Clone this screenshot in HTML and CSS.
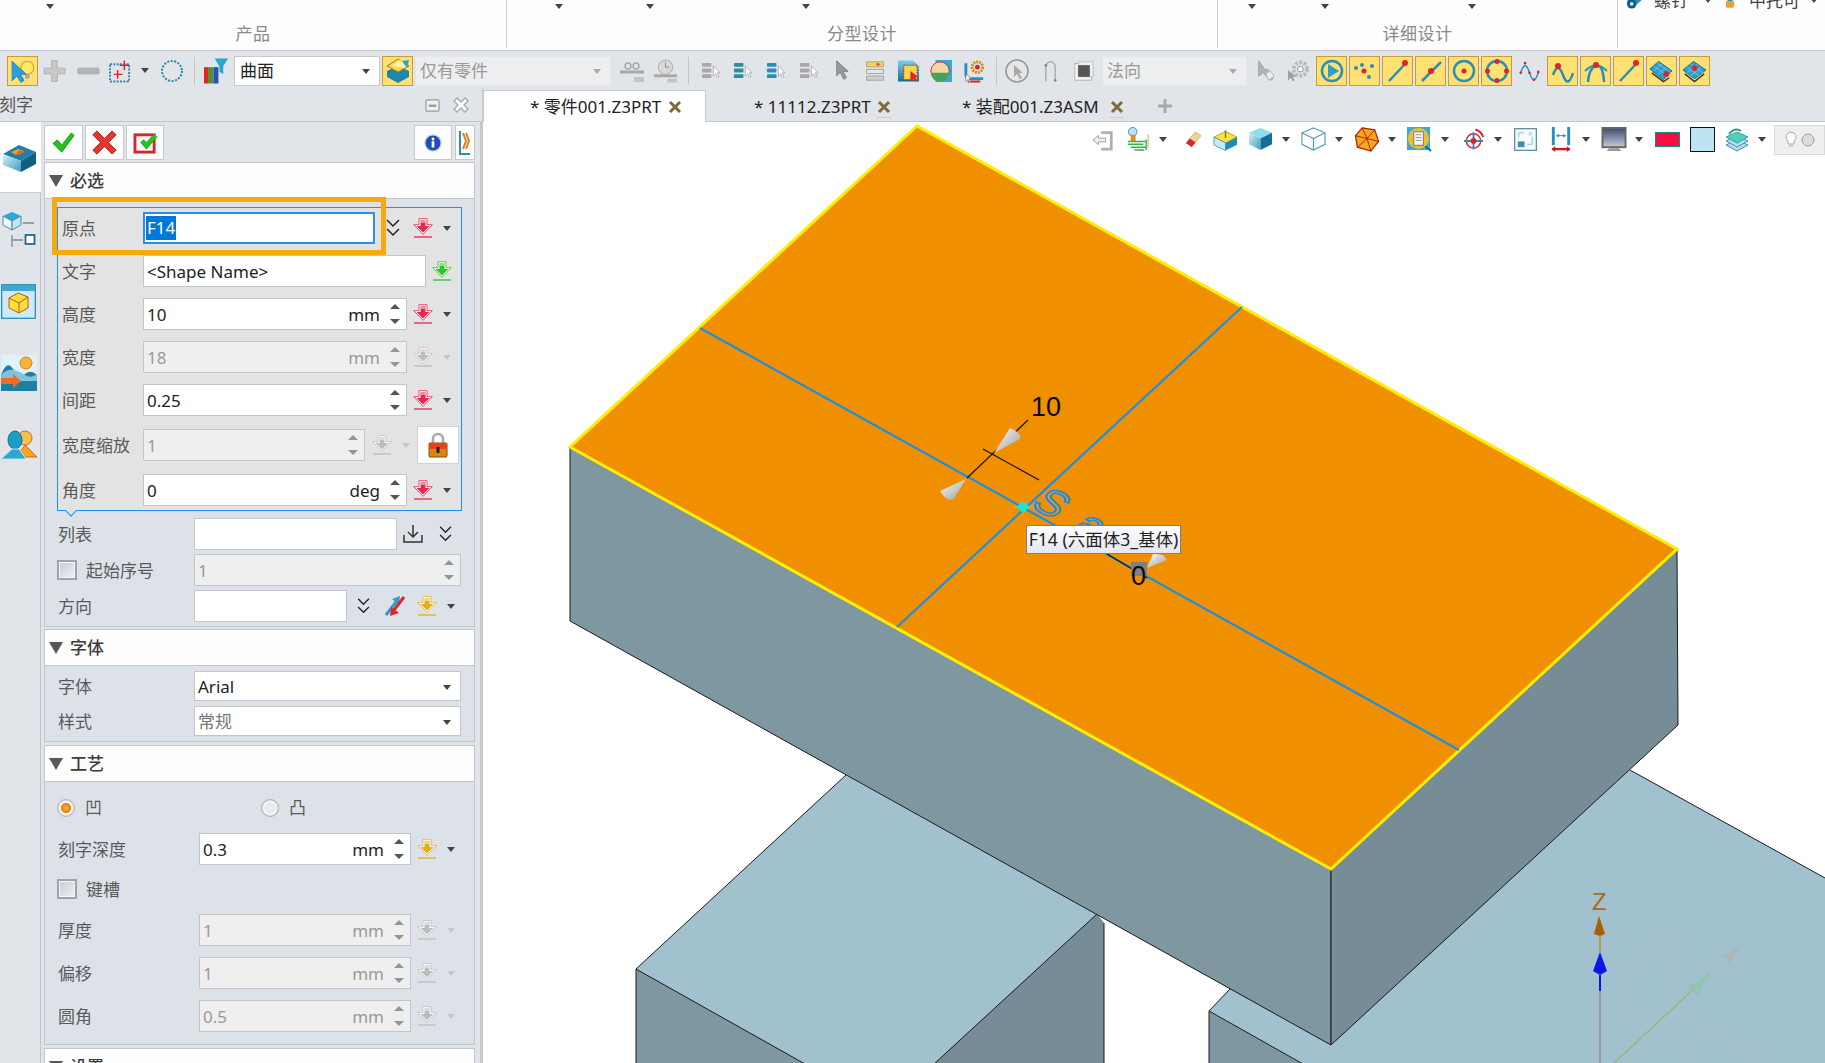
FILE: index.html
```html
<!DOCTYPE html>
<html lang="zh">
<head>
<meta charset="utf-8">
<title>刻字</title>
<link rel="stylesheet" href="styles.css">
</head>
<body>
<svg class="sprite" width="0" height="0">
  <defs>
    <linearGradient id="gBlue" x1="0" y1="0" x2="0" y2="1"><stop offset="0" stop-color="#7fd0e8"/><stop offset="1" stop-color="#0f6f96"/></linearGradient>
    <linearGradient id="gSide" x1="0" y1="0" x2="1" y2="1"><stop offset="0" stop-color="#d8f0f8"/><stop offset="1" stop-color="#3d9bbd"/></linearGradient>
    <linearGradient id="gCone" x1="0" y1="0" x2="1" y2="1"><stop offset="0" stop-color="#fff"/><stop offset="1" stop-color="#9a9a9a"/></linearGradient>
    <linearGradient id="gMon" x1="0" y1="0" x2="0" y2="1"><stop offset="0" stop-color="#3c4a70"/><stop offset="1" stop-color="#c8ccd8"/></linearGradient>
    <radialGradient id="gRadio"><stop offset="0" stop-color="#f9b24a"/><stop offset=".55" stop-color="#e87f10"/><stop offset=".65" stop-color="#fff"/><stop offset="1" stop-color="#cfcfcf"/></radialGradient>
    <radialGradient id="gRadioOff"><stop offset="0" stop-color="#eceef0"/><stop offset=".6" stop-color="#e4e6ea"/><stop offset=".7" stop-color="#fff"/><stop offset="1" stop-color="#cfcfcf"/></radialGradient>

    <symbol id="sel" viewBox="0 0 24 24"><circle cx="16" cy="9" r="6" fill="#ffe95e" stroke="#d0a820"/><path d="M14 15h4v4h-4z" fill="#a8a8a8"/><path d="M2 3v18l4.500-4.500 3.500 6 3-1.800-3.500-5.700H15z" fill="#2a9fe0" stroke="#1c7fb8" stroke-width=".8"/></symbol>
    <symbol id="plus" viewBox="0 0 24 24"><path d="M9 1h6v8h8v6h-8v8H9v-8H1V9h8z" fill="#c8c8c8" stroke="#b4b4b4"/></symbol>
    <symbol id="minus" viewBox="0 0 24 24"><rect x="1" y="9" width="22" height="6" rx="1" fill="#b5b5b5" stroke="#a8a8a8"/></symbol>
    <symbol id="dotrect" viewBox="0 0 24 24"><rect x="1" y="5" width="20" height="18" fill="none" stroke="#2f86a8" stroke-width="2" stroke-dasharray="2 1.5"/><path d="M16 1v10M11 6h10M9 11v9M5 15.500h9" stroke="#d8242c" stroke-width="1.500"/></symbol>
    <symbol id="dotcirc" viewBox="0 0 24 24"><circle cx="12" cy="12" r="10" fill="none" stroke="#2f86a8" stroke-width="2" stroke-dasharray="2 1.500"/></symbol>
    <symbol id="filter" viewBox="0 0 26 26"><path d="M0 9h5v17H0z" fill="#d82a20"/><path d="M5 9h5v17H5z" fill="#3b9a3a"/><path d="M10 9h5v17h-5z" fill="#2d4fb0"/><path d="M11 0h14l-5 8v8l-4-2V8z" fill="#28a8c8"/></symbol>
    <symbol id="hlcube" viewBox="0 0 26 26"><path d="M13 8l11 5v6l-11 6-11-6v-6z" fill="#1f86ad"/><path d="M13 1L2 8l11 6 11-6z" fill="#ffd34d" stroke="#a97b10"/><path d="M6 8l9-6 7 4-2 4z" fill="#fff0a8"/><path d="M17 3l7-1-2 8z" fill="#3a9dc4"/></symbol>
    <symbol id="chain" viewBox="0 0 24 24"><path d="M0 13h24" stroke="#a8a8a8" stroke-width="3"/><circle cx="8" cy="7" r="3" fill="none" stroke="#aaa" stroke-width="1.500"/><circle cx="16" cy="7" r="3" fill="none" stroke="#aaa" stroke-width="1.500"/><path d="M14 18h10v5H14z" fill="#c4c4c4"/></symbol>
    <symbol id="clock" viewBox="0 0 24 24"><path d="M0 17h24" stroke="#a8a8a8" stroke-width="3"/><circle cx="12" cy="8" r="7.500" fill="#d8d8d8" stroke="#aaa"/><path d="M12 3v5h4" fill="none" stroke="#888"/><path d="M14 20h10v4H14z" fill="#c4c4c4"/></symbol>
    <symbol id="stack" viewBox="0 0 20 20"><rect x="1" y="2" width="10" height="4" rx="1" fill="currentColor"/><rect x="1" y="8" width="10" height="4" rx="1" fill="currentColor"/><rect x="1" y="14" width="10" height="4" rx="1" fill="currentColor"/><path d="M13 5v11l2.500-2.500 2 4 1.500-1-2-4h3z" fill="#fff" stroke="#999" stroke-width=".7"/></symbol>
    <symbol id="cursor" viewBox="0 0 16 24"><path d="M2 1v17l4-4 4 8 3-2-4-7h6z" fill="#9a9a9a" stroke="#777"/></symbol>
    <symbol id="list" viewBox="0 0 24 24"><rect x="2" y="1" width="20" height="6" fill="#ffd54a" stroke="#999"/><path d="M2 4h12v-2l5 2-5 2V4" fill="#e0401c"/><rect x="2" y="10" width="20" height="5" fill="#e6e6e6" stroke="#999"/><rect x="2" y="18" width="20" height="5" fill="#d0d0d0" stroke="#999"/></symbol>
    <symbol id="blue-doc" viewBox="0 0 24 24"><path d="M1 1h16l6 6v16H1z" fill="url(#gBlue)"/><rect x="7" y="6" width="14" height="15" fill="#ffd54a" stroke="#c8242c" stroke-dasharray="2 1"/><path d="M14 12v10l3-2 2 3 2-1-2-3 3-1z" fill="#d8242c"/></symbol>
    <symbol id="globe" viewBox="0 0 24 24"><rect x="6" y="0" width="18" height="24" fill="#3aa8d0"/><circle cx="11" cy="12" r="10" fill="#f0d8a0" stroke="#c8242c"/><path d="M1 14a10 10 0 0 0 20 0z" fill="#4ba05a"/></symbol>
    <symbol id="gearb" viewBox="0 0 24 24"><circle cx="15" cy="8" r="5.500" fill="none" stroke="#e08a10" stroke-width="3" stroke-dasharray="2 1"/><circle cx="15" cy="8" r="2.500" fill="#d8242c"/><path d="M3 4v12q0 4 4 4h14" fill="none" stroke="#2a8fc0" stroke-width="3"/><path d="M6 18v5h12" fill="none" stroke="#d8242c" stroke-width="2"/><path d="M3 15v8l2-2 2 3 1-1-2-3h3z" fill="#fff" stroke="#666" stroke-width=".6"/></symbol>
    <symbol id="compass" viewBox="0 0 24 24"><circle cx="12" cy="12" r="11" fill="#e6e6e6" stroke="#999" stroke-width="1.600"/><path d="M9 6v12l3-3 3 5 2-1-3-5h4z" fill="#a8a8a8"/></symbol>
    <symbol id="bend" viewBox="0 0 16 24"><path d="M3 23V6q5-8 10 0v16" fill="none" stroke="#aaa" stroke-width="1.500"/><circle cx="3" cy="6" r="1.500" fill="#888"/><circle cx="13" cy="22" r="1.500" fill="#888"/></symbol>
    <symbol id="square" viewBox="0 0 24 24"><rect x="1" y="3" width="20" height="20" fill="#f4f4f4" stroke="#aaa"/><rect x="5" y="1" width="18" height="18" fill="#eee" stroke="#bbb"/><rect x="5" y="5" width="14" height="14" fill="#555"/></symbol>
    <symbol id="arrowdis" viewBox="0 0 20 26"><path d="M2 1v18l5-4 2 2 8 7 2-3-7-7 2-2-5-1z" fill="#b4b4b4" stroke="#999"/><path d="M10 16l6-3 4 6-6 5z" fill="#eee" stroke="#aaa"/></symbol>
    <symbol id="gear" viewBox="0 0 24 24"><circle cx="14" cy="10" r="7" fill="none" stroke="#bbb" stroke-width="4" stroke-dasharray="3 1.500"/><circle cx="14" cy="10" r="3" fill="#fff" stroke="#888"/><path d="M1 11v11l3-3 2 4 2-1-2-4h4z" fill="#a0a0a0"/></symbol>

    <symbol id="play" viewBox="0 0 24 24"><circle cx="12" cy="12" r="10" fill="none" stroke="#2a8fb8" stroke-width="2.500"/><path d="M8 5l11 7-11 7z" fill="#2a9fd0"/></symbol>
    <symbol id="pts" viewBox="0 0 24 24"><circle cx="3" cy="9" r="2" fill="#2a8fb8"/><circle cx="9" cy="6" r="2" fill="#2a8fb8"/><circle cx="19" cy="7" r="2" fill="#2a8fb8"/><circle cx="16" cy="18" r="2" fill="#2a8fb8"/><circle cx="11" cy="12" r="2.500" fill="#e0242c"/></symbol>
    <symbol id="lineend" viewBox="0 0 24 24"><path d="M3 22L20 4" stroke="#2a8fb8" stroke-width="2.500"/><circle cx="19" cy="4" r="3" fill="#e0242c"/></symbol>
    <symbol id="linemid" viewBox="0 0 24 24"><path d="M3 22L22 3" stroke="#2a8fb8" stroke-width="2.500"/><circle cx="12" cy="12" r="3" fill="#e0242c"/></symbol>
    <symbol id="circc" viewBox="0 0 24 24"><circle cx="12" cy="12" r="10" fill="none" stroke="#2a8fb8" stroke-width="2.500"/><circle cx="12" cy="12" r="2.500" fill="#e0242c"/></symbol>
    <symbol id="circq" viewBox="0 0 24 24"><circle cx="12" cy="12" r="10" fill="none" stroke="#2a8fb8" stroke-width="2.500"/><g fill="#e0242c"><circle cx="12" cy="2.500" r="2.500"/><circle cx="12" cy="21.500" r="2.500"/><circle cx="2.500" cy="12" r="2.500"/><circle cx="21.500" cy="12" r="2.500"/></g></symbol>
    <symbol id="wavep" viewBox="0 0 24 24"><path d="M2 14q5-16 10 0t10 0" fill="none" stroke="#2a8fb8" stroke-width="1.600"/><g fill="#d8242c"><circle cx="7" cy="3" r="1.500"/><circle cx="2" cy="14" r="1.500"/><circle cx="12" cy="14" r="1.500"/><circle cx="17" cy="22" r="1.500"/><circle cx="22" cy="13" r="1.500"/></g></symbol>
    <symbol id="wavea" viewBox="0 0 24 24"><path d="M2 16q5-14 10 0t10-2" fill="none" stroke="#2a8fb8" stroke-width="2.500"/><circle cx="7" cy="7" r="3" fill="#e0242c"/></symbol>
    <symbol id="arch" viewBox="0 0 24 24"><path d="M1 12q11-11 22 0" fill="none" stroke="#2a8fb8" stroke-width="2"/><path d="M4 23q1-14 8-16t8 16" fill="none" stroke="#2a8fb8" stroke-width="2.500"/><circle cx="12" cy="6" r="3" fill="#e0242c"/></symbol>
    <symbol id="surf1" viewBox="0 0 26 24"><path d="M1 10l9-8 14 10-9 9z" fill="#2a9fd0" stroke="#0f6f96"/><path d="M5 7l14 10M9 4l14 10M5 12l9-8M9 16l9-8" stroke="#9adcf0" stroke-width=".6"/><path d="M3 14l12 9 6-4" fill="none" stroke="#333" stroke-width="1.500"/><circle cx="18" cy="15" r="3" fill="#e0242c"/></symbol>
    <symbol id="surf2" viewBox="0 0 26 24"><path d="M1 11l11-9 13 9-12 9z" fill="#2a9fd0" stroke="#0f6f96"/><path d="M5 8l13 9M9 5l13 9M5 14l11-9M9 17l11-9" stroke="#9adcf0" stroke-width=".6"/><path d="M3 15l10 8 10-8" fill="none" stroke="#333" stroke-width="1.500"/><circle cx="13" cy="9" r="3" fill="#e0242c"/></symbol>

    <symbol id="pick" viewBox="0 0 20 20"><path d="M6 .7h8v6h5.300L10 16.300.700 6.700H6z" fill="#fff" stroke="currentColor" stroke-opacity=".8"/><path d="M7.500 2h5v6h4L10 14.500 3.500 8h4z" fill="currentColor"/><path d="M7.500 2h5v3h-5z" fill="#fff" fill-opacity=".45"/><path d="M1 19h18" stroke="currentColor" stroke-width="1.300"/></symbol>
    <symbol id="chev" viewBox="0 0 14 20"><path d="M1 2l6 6 6-6M1 11l6 6 6-6" fill="none" stroke="#222" stroke-width="1.500"/></symbol>
    <symbol id="dl" viewBox="0 0 20 20"><path d="M1 11v7h18v-7M10 1v12M5 8l5 5 5-5" fill="none" stroke="#333" stroke-width="1.500"/></symbol>
    <symbol id="flip" viewBox="0 0 22 22"><path d="M2 20L12 7" stroke="#2a9fd0" stroke-width="3"/><path d="M8 4l8-3-1 9z" fill="#2a9fd0"/><path d="M20 2L10 15" stroke="#e0242c" stroke-width="3"/><path d="M6 21l1-9 8 6z" fill="#e0242c"/></symbol>
    <symbol id="lock" viewBox="0 0 20 26"><path d="M5 12V7a5 5 0 0 1 10 0v5" fill="none" stroke="#aaa" stroke-width="2.500"/><rect x="1" y="11" width="18" height="14" rx="1" fill="#d9860f" stroke="#8a4a10"/><rect x="1" y="11" width="18" height="6" fill="#e8421c"/><rect x="8.500" y="15" width="3" height="6" fill="#222"/></symbol>

    <symbol id="exit" viewBox="0 0 24 24"><path d="M10 4h11v18H10" fill="none" stroke="#b0b0b0" stroke-width="3"/><path d="M1 12l6-5v3h8v4H7v3z" fill="#f0f0f0" stroke="#999"/></symbol>
    <symbol id="mill" viewBox="0 0 26 26"><circle cx="8" cy="5" r="4.500" fill="#bfe0ee" stroke="#3a8fb8"/><rect x="6" y="8" width="5" height="7" fill="#e88a20"/><path d="M3 15h18M3 18h16M6 21h16M10 24h10M22 13v11" fill="none" stroke="#36b34a" stroke-width="1.500"/><path d="M24 8v14" stroke="#d8a060"/></symbol>
    <symbol id="eraser" viewBox="0 0 18 20"><path d="M1 14L11 2l6 4L7 18z" fill="#f2d488" stroke="#999" stroke-width=".6"/><path d="M1 14l4-5 6 4-4 5z" fill="#d8242c"/><path d="M2 15l4 3" stroke="#fff"/></symbol>
    <symbol id="ycube" viewBox="0 0 26 24"><path d="M13 3l12 6-12 6L1 9z" fill="#ffe040" stroke="#c8a010"/><path d="M1 9l12 6v8L1 17z" fill="#c5ecf6" stroke="#4aa0c0"/><path d="M25 9l-12 6v8l12-6z" fill="#1c8cb8"/><path d="M13 10V2" stroke="#2fa03a" stroke-width="1.500"/></symbol>
    <symbol id="bcube" viewBox="0 0 26 26"><path d="M13 1l12 5-12 6L1 6z" fill="#8fdcee"/><path d="M1 6l12 6v12L1 18z" fill="url(#gSide)"/><path d="M25 6l-12 6v12l12-6z" fill="#136f95"/></symbol>
    <symbol id="wcube" viewBox="0 0 26 26"><path d="M13 1l12 5v12l-12 6-12-6V6zM1 6l12 6 12-6M13 12v12" fill="#fff" stroke="#5a9ab8" stroke-width="1.200"/></symbol>
    <symbol id="poly" viewBox="0 0 26 26"><path d="M8 1l13 2 4 12-8 10-14-4L1 9z" fill="#f4a81c" stroke="#b0200c" stroke-width="1.300"/><path d="M13 12L8 1M13 12L21 3M13 12l12 3M13 12l4 13M13 12L3 21M13 12L1 9" stroke="#b0200c"/></symbol>
    <symbol id="docz" viewBox="0 0 26 26"><rect x="0" y="0" width="24" height="24" fill="#3aa8d8"/><circle cx="12" cy="12" r="11" fill="#e8c030"/><rect x="7" y="5" width="10" height="14" fill="#f4f4f4" stroke="#777"/><path d="M9 8h6M9 11h6M9 14h6" stroke="#999"/><path d="M19 20l6 5" stroke="#1a6a90" stroke-width="2"/></symbol>
    <symbol id="target" viewBox="0 0 22 24"><circle cx="11" cy="13" r="7.500" fill="none" stroke="#d8242c" stroke-width="1.500"/><path d="M11 4v18M1 13h20" stroke="#2a8fb8" stroke-width="2"/><circle cx="11" cy="13" r="3" fill="#d8242c"/><path d="M13 1a11 11 0 0 1 8 8" fill="none" stroke="#d8242c" stroke-width="2"/></symbol>
    <symbol id="fit" viewBox="0 0 24 24"><rect x=".700" y=".700" width="22.600" height="22.600" fill="#f8fbfc" stroke="#5a8aa0" stroke-width="1.300"/><rect x="4" y="14" width="7" height="6" fill="#3a8fb8"/><path d="M5 10V5h5" fill="none" stroke="#7cc4dc"/><path d="M19 9v8h-5" fill="none" stroke="#7cc4dc"/><circle cx="17" cy="6" r="2" fill="#bce4f0"/></symbol>
    <symbol id="dim" viewBox="0 0 20 26"><path d="M2 0v19M18 0v19" stroke="#2a8fb8" stroke-width="3"/><path d="M5 9h10" stroke="#2a8fb8"/><path d="M5 9l3-2v4zM15 9l-3-2v4z" fill="#2a8fb8"/><path d="M1 23h18" stroke="#c02020" stroke-width="2.500"/><path d="M0 23l4-3v6zM20 23l-4-3v6z" fill="#c02020"/></symbol>
    <symbol id="mon" viewBox="0 0 26 26"><rect x="1" y="1" width="24" height="20" fill="url(#gMon)" stroke="#666" stroke-width="2"/><path d="M8 22h10l3 3H5z" fill="#999"/></symbol>
    <symbol id="layers" viewBox="0 0 24 24"><path d="M1 17l11-5 11 5-11 6z" fill="#b7dcec" stroke="#4a90b0"/><path d="M1 13l11-5 11 5-11 6z" fill="#b7dcec" stroke="#4a90b0"/><path d="M1 9l11-5 11 5-11 6z" fill="#4fd0b8" stroke="#3aa0a0"/><path d="M4 6q6-7 12-3" fill="none" stroke="#2a9a80" stroke-width="2"/></symbol>

    <symbol id="rail1" viewBox="0 0 36 32"><path d="M18 4l17 7-15 9L2 13z" fill="#1f7fa6"/><path d="M10 11l7-3 6 2-8 4z" fill="#e8a030"/><path d="M18 9l6 2-6 3-3-1z" fill="#e8641c"/><path d="M2 13l18 7v11L2 24z" fill="url(#gSide)"/><path d="M35 11l-15 9v11l15-8z" fill="#0f5f82"/></symbol>
    <symbol id="rail2" viewBox="0 0 34 36"><path d="M10 1l9 4-9 5-9-5z" fill="#2aa8d8"/><path d="M1 5l9 5v9l-9-5z" fill="#eaf6fb" stroke="#5a8aa0"/><path d="M19 5l-9 5v9l9-5z" fill="#bfe4f2" stroke="#5a8aa0"/><path d="M21 12h11M10 24v12M10 29h11" stroke="#6a8ea4" stroke-width="1.300"/><rect x="23.500" y="24" width="9" height="9" fill="#fff" stroke="#1d6a8f" stroke-width="1.800"/></symbol>
    <symbol id="rail3" viewBox="0 0 35 35"><rect x=".700" y=".700" width="33.600" height="33.600" fill="#cfeaf6" stroke="#2a8fb8" stroke-width="1.300"/><rect x="1" y="1" width="33" height="6" fill="#41a8cc"/><path d="M8 14l9-5 10 4v11l-9 5-10-5z" fill="#ffdf3a" stroke="#c0541c"/><path d="M8 14l10 5 9-6M18 19v10" fill="none" stroke="#c0541c"/></symbol>
    <symbol id="rail4" viewBox="0 0 36 36"><rect width="36" height="36" fill="#1f7fa0"/><path d="M0 0h36v20q-6-6-12-1t-12-5-12 6z" fill="#dff2f8"/><path d="M0 20q6-6 12-5t12 5 12-1v7H0z" fill="#7ec4da"/><circle cx="25" cy="8" r="6" fill="#f6b23c" stroke="#d8801c"/><path d="M0 23h12v-4l8 7-8 7v-4H0z" fill="#ef6b2a"/></symbol>
    <symbol id="rail5" viewBox="0 0 36 32"><circle cx="24" cy="9" r="7" fill="#f7c050" stroke="#d8641c"/><path d="M18 24l6-8 12 12H24z" fill="#f4a81c" stroke="#d8641c"/><ellipse cx="14" cy="11" rx="7" ry="9" fill="#1a9fc4" stroke="#0f6f96"/><path d="M0 30l11-10h7l7 10z" fill="#28a8cc" stroke="#bfe4f2"/></symbol>

    <symbol id="check" viewBox="0 0 26 24"><path d="M1 13l5-4 5 6L22 1l3 3L11 23z" fill="#22c41e" stroke="#118a10"/></symbol>
    <symbol id="cross" viewBox="0 0 26 26"><path d="M5 1l8 8 8-8 4 4-8 8 8 8-4 4-8-8-8 8-4-4 8-8-8-8z" fill="#e8352c" stroke="#a01a14"/></symbol>
    <symbol id="checkb" viewBox="0 0 26 24"><rect x="2" y="4" width="20" height="18" fill="#fff" stroke="#d8242c" stroke-width="3"/><path d="M8 12l3-3 3 3 8-9 3 3-11 13z" fill="#22c41e" stroke="#118a10" stroke-width=".6"/></symbol>
    <symbol id="info" viewBox="0 0 20 20"><circle cx="10" cy="10" r="9" fill="#1f4fb0" stroke="#c8d0dc" stroke-width="1.500"/><rect x="8.500" y="8" width="3" height="7" fill="#fff"/><circle cx="10" cy="5.500" r="1.600" fill="#fff"/></symbol>
    <symbol id="next" viewBox="0 0 12 26"><path d="M1 1v23h10" fill="none" stroke="#2a8fb8" stroke-width="2"/><path d="M4 3l3 8-3 8M7 3l3 8-3 8" fill="none" stroke="#e07a20" stroke-width="2"/></symbol>
    <symbol id="winb" viewBox="0 0 16 16"><rect x="1" y="2" width="14" height="12" rx="1.500" fill="#f0f0f0" stroke="#9a9a9a" stroke-width="1.300"/><rect x="4" y="7" width="8" height="2.500" fill="#9a9a9a"/></symbol>
    <symbol id="xgray" viewBox="0 0 18 18"><path d="M2 5l3-3 4 4 4-4 3 3-4 4 4 4-3 3-4-4-4 4-3-3 4-4z" fill="#fff" stroke="#a8a8a8" stroke-width="1.400"/></symbol>
    <symbol id="xtab" viewBox="0 0 14 14"><path d="M2 2l10 10M12 2L2 12" stroke="#7d6b3c" stroke-width="3"/></symbol>
    <symbol id="screw" viewBox="0 0 20 20"><path d="M1 10l12-8 6 5-12 10z" fill="#2a8fb8"/><circle cx="6" cy="13" r="5" fill="#0f5f82"/><circle cx="6" cy="13" r="2" fill="#bfe4f2"/></symbol>
    <symbol id="bolt" viewBox="0 0 12 20"><rect x="3" y="0" width="6" height="12" fill="#2a8fb8"/><rect x="1" y="10" width="10" height="8" rx="2" fill="#e8a030"/></symbol>
  </defs>
</svg>

<div class="app">
  <header class="ribbon">
    <section class="rgroup g1">
      <div class="rarrows a1"><i class="tri"></i></div>
      <div class="rlabel">产品</div>
    </section>
    <section class="rgroup g2">
      <div class="rarrows a2"><i class="tri"></i><i class="tri"></i><i class="tri"></i></div>
      <div class="rlabel">分型设计</div>
    </section>
    <section class="rgroup g3">
      <div class="rarrows a3"><i class="tri"></i><i class="tri"></i><i class="tri"></i></div>
      <div class="rlabel">详细设计</div>
    </section>
    <section class="g4">
      <svg width="19" height="20"><use href="#screw"/></svg><span class="m9">螺钉</span><i class="tri small m17"></i>
      <svg class="m14" width="10" height="20"><use href="#bolt"/></svg><span class="m14">中托可</span><i class="tri small m11"></i>
    </section>
  </header>

  <nav class="toolbar">
    <div class="hl w31 "><svg width="26" height="26"><use href="#sel"/></svg></div>
    <svg class="m5" width="23" height="24"><use href="#plus"/></svg>
    <svg class="m11" width="23" height="24"><use href="#minus"/></svg>
    <svg class="m9" width="23" height="24"><use href="#dotrect"/></svg>
    <i class="tri m9"></i>
    <svg class="m11" width="24" height="24"><use href="#dotcirc"/></svg>
    <i class="sep m10"></i>
    <svg class="m9" width="25" height="26"><use href="#filter"/></svg>
    <div class="select w146 m5"><span>曲面</span><i class="tri"></i></div>
    <div class="hl w31 m2"><svg width="26" height="26"><use href="#hlcube"/></svg></div>
    <div class="select off w196 m2"><span>仅有零件</span><i class="tri"></i></div>
    <svg class="m9" width="24" height="24"><use href="#chain"/></svg>
    <svg class="m10" width="23" height="24"><use href="#clock"/></svg>
    <i class="sep m11"></i>
    <svg class="m12 c-gray" width="19" height="19"><use href="#stack"/></svg>
    <svg class="m13 c-mix1" width="19" height="19"><use href="#stack"/></svg>
    <svg class="m14 c-mix2" width="19" height="19"><use href="#stack"/></svg>
    <svg class="m14 c-gray" width="19" height="19"><use href="#stack"/></svg>
    <svg class="m17" width="14" height="21"><use href="#cursor"/></svg>
    <svg class="m16" width="20" height="24"><use href="#list"/></svg>
    <svg class="m12" width="23" height="24"><use href="#blue-doc"/></svg>
    <svg class="m10" width="22" height="24"><use href="#globe"/></svg>
    <svg class="m11" width="23" height="24"><use href="#gearb"/></svg>
    <i class="sep m10"></i>
    <svg class="m8" width="24" height="24"><use href="#compass"/></svg>
    <svg class="m14" width="15" height="24"><use href="#bend"/></svg>
    <svg class="m16" width="20" height="20"><use href="#square"/></svg>
    <div class="select off w145 m8"><span>法向</span><i class="tri"></i></div>
    <svg class="m10" width="17" height="24"><use href="#arrowdis"/></svg>
    <svg class="m13" width="23" height="24"><use href="#gear"/></svg>
    <div class="hl w31 m6"><svg width="24" height="24"><use href="#play"/></svg></div>
    <div class="hl w31 m2"><svg width="24" height="24"><use href="#pts"/></svg></div>
    <div class="hl w31 m2"><svg width="24" height="24"><use href="#lineend"/></svg></div>
    <div class="hl w31 m2"><svg width="24" height="24"><use href="#linemid"/></svg></div>
    <div class="hl w31 m2"><svg width="24" height="24"><use href="#circc"/></svg></div>
    <div class="hl w31 m2"><svg width="24" height="24"><use href="#circq"/></svg></div>
    <svg class="m7" width="21" height="24"><use href="#wavep"/></svg>
    <div class="hl w31 m7"><svg width="24" height="24"><use href="#wavea"/></svg></div>
    <div class="hl w31 m2"><svg width="24" height="24"><use href="#arch"/></svg></div>
    <div class="hl w31 m2"><svg width="24" height="24"><use href="#lineend"/></svg></div>
    <div class="hl w31 m2"><svg width="25" height="24"><use href="#surf1"/></svg></div>
    <div class="hl w31 m2"><svg width="25" height="24"><use href="#surf2"/></svg></div>
  </nav>

  <div class="work">
    <aside class="left">
      <div class="ptitle">
        <span class="ptext">刻字</span>
        <svg class="pwin" width="15" height="15"><use href="#winb"/></svg>
        <svg class="m12" width="18" height="18"><use href="#xgray"/></svg>
      </div>
      <div class="pbody">
        <div class="rail">
          <div class="rtab on"><svg width="36" height="32"><use href="#rail1"/></svg></div>
          <div class="rtab"><svg width="34" height="36"><use href="#rail2"/></svg></div>
          <div class="rtab"><svg width="35" height="35"><use href="#rail3"/></svg></div>
          <div class="rtab"><svg width="36" height="36"><use href="#rail4"/></svg></div>
          <div class="rtab"><svg width="36" height="32"><use href="#rail5"/></svg></div>
        </div>
        <div class="panel">
          <div class="actions">
            <button class="abtn"><svg width="23" height="21"><use href="#check"/></svg></button>
            <button class="abtn"><svg width="25" height="25"><use href="#cross"/></svg></button>
            <button class="abtn b38"><svg width="25" height="23"><use href="#checkb"/></svg></button>
            <span class="grow"></span>
            <button class="abtn b38"><svg width="18" height="18"><use href="#info"/></svg></button>
            <button class="abtn b20"><svg width="12" height="26"><use href="#next"/></svg></button>
          </div>

          <section class="sec s1">
            <h3 class="shead"><i class="stri"></i>必选</h3>
            <div class="sbody b1">
              <div class="blue">
                <div class="anno"></div>
                <div class="row">
                  <label class="lab">原点</label>
                  <div class="field focus w232"><span class="selected">F14</span></div>
                  <svg class="m11" width="14" height="20"><use href="#chev"/></svg>
                  <svg class="m13 c-red" width="20" height="20"><use href="#pick"/></svg>
                  <i class="tri m10"></i>
                </div>
                <div class="row">
                  <label class="lab">文字</label>
                  <div class="field w283"><span>&lt;Shape Name&gt;</span></div>
                  <svg class="m6 c-green" width="20" height="20"><use href="#pick"/></svg>
                </div>
                <div class="row">
                  <label class="lab">高度</label>
                  <div class="field num w264"><span>10</span><em>mm</em><b class="spin"><i></i><i></i></b></div>
                  <svg class="m6 c-red" width="20" height="20"><use href="#pick"/></svg>
                  <i class="tri m10"></i>
                </div>
                <div class="row">
                  <label class="lab">宽度</label>
                  <div class="field num dis w264"><span>18</span><em>mm</em><b class="spin"><i></i><i></i></b></div>
                  <svg class="m6 c-off" width="20" height="20"><use href="#pick"/></svg>
                  <i class="tri off m10"></i>
                </div>
                <div class="row">
                  <label class="lab">间距</label>
                  <div class="field num w264"><span>0.25</span><em></em><b class="spin"><i></i><i></i></b></div>
                  <svg class="m6 c-red" width="20" height="20"><use href="#pick"/></svg>
                  <i class="tri m10"></i>
                </div>
                <div class="row lockrow">
                  <label class="lab">宽度缩放</label>
                  <div class="field num dis w222"><span>1</span><em></em><b class="spin"><i></i><i></i></b></div>
                  <svg class="m7 c-off" width="20" height="20"><use href="#pick"/></svg>
                  <i class="tri off m10"></i>
                  <button class="lockbtn m7"><svg width="20" height="26"><use href="#lock"/></svg></button>
                </div>
                <div class="row">
                  <label class="lab">角度</label>
                  <div class="field num w264"><span>0</span><em>deg</em><b class="spin"><i></i><i></i></b></div>
                  <svg class="m6 c-red" width="20" height="20"><use href="#pick"/></svg>
                  <i class="tri m10"></i>
                </div>
                <i class="notch"></i>
              </div>
              <div class="row2 t7">
                <label class="lab2">列表</label>
                <div class="field w203"></div>
                <svg class="m6" width="20" height="20"><use href="#dl"/></svg>
                <svg class="m16" width="13" height="18"><use href="#chev"/></svg>
              </div>
              <div class="row2 t4">
                <i class="cb"></i><label class="lab3">起始序号</label>
                <div class="field num dis w267"><span>1</span><em></em><b class="spin"><i></i><i></i></b></div>
              </div>
              <div class="row2 t4">
                <label class="lab2">方向</label>
                <div class="field w153"></div>
                <svg class="m10" width="13" height="18"><use href="#chev"/></svg>
                <svg class="m14" width="22" height="22"><use href="#flip"/></svg>
                <svg class="m11 c-yellow" width="20" height="20"><use href="#pick"/></svg>
                <i class="tri m10"></i>
              </div>
            </div>
          </section>

          <section class="sec s2">
            <h3 class="shead"><i class="stri"></i>字体</h3>
            <div class="sbody b2">
              <div class="row2 h30">
                <label class="lab2">字体</label>
                <div class="field drop w267"><span>Arial</span><i class="tri"></i></div>
              </div>
              <div class="row2 h30 t5">
                <label class="lab2">样式</label>
                <div class="field drop w267"><span class="gr">常规</span><i class="tri"></i></div>
              </div>
            </div>
          </section>

          <section class="sec s3">
            <h3 class="shead"><i class="stri"></i>工艺</h3>
            <div class="sbody b3">
              <div class="radios">
                <div class="radio"><svg width="18" height="18"><circle cx="9" cy="9" r="8.500" fill="url(#gRadio)" stroke="#b8b8b8"/></svg><span>凹</span></div>
                <div class="radio"><svg width="18" height="18"><circle cx="9" cy="9" r="8.500" fill="url(#gRadioOff)" stroke="#b0b0b0"/></svg><span>凸</span></div>
              </div>
              <div class="row2 t16">
                <label class="lab4">刻字深度</label>
                <div class="field num w212"><span>0.3</span><em>mm</em><b class="spin"><i></i><i></i></b></div>
                <svg class="m6 c-yellow" width="20" height="20"><use href="#pick"/></svg>
                <i class="tri m10"></i>
              </div>
              <div class="row2 h20 t14">
                <i class="cb"></i><label class="lab3">键槽</label>
              </div>
              <div class="row2 t15">
                <label class="lab4">厚度</label>
                <div class="field num dis w212"><span>1</span><em>mm</em><b class="spin"><i></i><i></i></b></div>
                <svg class="m6 c-off" width="20" height="20"><use href="#pick"/></svg>
                <i class="tri off m10"></i>
              </div>
              <div class="row2 t11">
                <label class="lab4">偏移</label>
                <div class="field num dis w212"><span>1</span><em>mm</em><b class="spin"><i></i><i></i></b></div>
                <svg class="m6 c-off" width="20" height="20"><use href="#pick"/></svg>
                <i class="tri off m10"></i>
              </div>
              <div class="row2 t11">
                <label class="lab4">圆角</label>
                <div class="field num dis w212"><span>0.5</span><em>mm</em><b class="spin"><i></i><i></i></b></div>
                <svg class="m6 c-off" width="20" height="20"><use href="#pick"/></svg>
                <i class="tri off m10"></i>
              </div>
            </div>
          </section>

          <section class="sec s4">
            <h3 class="shead"><i class="stri"></i>设置</h3>
          </section>
        </div>
      </div>
    </aside>

    <main class="right">
      <div class="tabs">
        <div class="tab on t1"><span>* 零件001.Z3PRT</span><svg width="14" height="14"><use href="#xtab"/></svg></div>
        <div class="tab t2"><span>* 11112.Z3PRT</span><svg class="ul" width="14" height="14"><use href="#xtab"/></svg></div>
        <div class="tab t3"><span>* 装配001.Z3ASM</span><svg class="ul" width="14" height="14"><use href="#xtab"/></svg></div>
        <svg class="addtab" width="16" height="16"><path d="M8 1v14M1 8h14" stroke="#a9a9a9" stroke-width="3"/></svg>
      </div>
      <div class="viewport">
        <svg class="scene" viewBox="483 121 1342 942" width="1342" height="942">
          <!-- lower left block -->
          <path d="M846 774L1097 913 1104 922V1063H934L805 1063 636 1063V968z" fill="#a2c1cf"/>
          <path d="M1097 913L1104 922V1063H934z" fill="#768c96"/>
          <path d="M636 968L805 1063H636z" fill="#7e97a1"/>
          <path d="M846 774L636 968L805 1063M636 968V1063M1097 913L934 1063M1104 922V1063" fill="none" stroke="#1a1a1a" stroke-width="1"/>
          <!-- lower right block -->
          <path d="M1230 988L1209 1010 1303 1063H1825V877L1630 769z" fill="#a2c1cf"/>
          <path d="M1209 1010L1303 1063H1209z" fill="#7e97a1"/>
          <path d="M1230 988L1209 1010L1303 1063M1209 1010V1063M1630 769L1825 877" fill="none" stroke="#1a1a1a" stroke-width="1"/>
          <!-- main block -->
          <path d="M570 446L1331 868V1044L570 620z" fill="#7e97a1" stroke="#1a1a1a" stroke-width="1"/>
          <path d="M1331 868L1677 548 1678 724 1331 1044z" fill="#768c96" stroke="#1a1a1a" stroke-width="1"/>
          <path d="M917 125L1677 548 1331 868 570 446z" fill="#f09000" stroke="#ffee00" stroke-width="3" stroke-linejoin="miter"/>
          <path d="M700 327L1459 749M1242 306L897 626" stroke="#1b8fe6" stroke-width="2.200"/>
          <!-- dimensions -->
          <path d="M1028 419L967 477M983 448L1039 479M1107 553L1147 577" stroke="#111" stroke-width="1.200"/>
          <path d="M994 452L1010 427Q1022 432 1020 438z" fill="url(#gCone)"/>
          <path d="M966 478L940 490Q946 500 953 499z" fill="url(#gCone)"/>
          <rect x="1131" y="561" width="16" height="14" fill="#808080"/>
          <path d="M1147 567L1153 553Q1165 552 1167 559z" fill="url(#gCone)"/>
          <text class="dim-text" x="1031" y="415">10</text>
          <text class="dim-text" x="1131" y="584">0</text>
          <text class="etch" transform="matrix(.875 .486 -.733 .68 1029 505)" x="0" y="0">Sa</text>
          <path d="M1023 496v20M1013 506h20" stroke="#f7a030" stroke-width="1"/>
          <path d="M1023 500l7 6-7 6-7-6z" fill="#27e0d4"/>
          <!-- triad -->
          <g fill="none" stroke="#b9c4ad" stroke-opacity=".65">
            <path d="M1600 994L1671 929V1008L1762 1060M1600 994L1691 1044V1063"/>
          </g>
          <path d="M1600 990V1063" stroke="#9c9aa8" stroke-width="2"/>
          <path d="M1613 1063L1710 973" stroke="#9eb57a" stroke-width="1.500"/>
          <path d="M1710 973L1742 944" stroke="#b6c0b0" stroke-width="1.200"/>
          <path d="M1710 973L1687 986 1697 995z" fill="#93c4b0"/>
          <path d="M1742 944L1723 955 1730 962z" fill="#a9b8b2"/>
          <path d="M1600 935V951" stroke="#b98a3a" stroke-width="1.500"/>
          <path d="M1599 915L1605 933 1600 935 1594 933z" fill="#a85f08"/>
          <path d="M1600 951L1607 970 1600 974 1593 970z" fill="#0a14f0"/>
          <path d="M1600 974V990" stroke="#0a14f0" stroke-width="2"/>
          <text class="axis" x="1592" y="909">Z</text>
        </svg>
        <div class="vtools">
          <svg width="22" height="22"><use href="#exit"/></svg>
          <svg class="m11" width="25" height="25"><use href="#mill"/></svg>
          <i class="tri m9"></i>
          <svg class="m18" width="17" height="19"><use href="#eraser"/></svg>
          <svg class="m11" width="25" height="24"><use href="#ycube"/></svg>
          <svg class="m10" width="25" height="25"><use href="#bcube"/></svg>
          <i class="tri m9"></i>
          <svg class="m11" width="25" height="25"><use href="#wcube"/></svg>
          <i class="tri m9"></i>
          <svg class="m11" width="26" height="25"><use href="#poly"/></svg>
          <i class="tri m8"></i>
          <svg class="m11" width="25" height="25"><use href="#docz"/></svg>
          <i class="tri m9"></i>
          <svg class="m14" width="21" height="24"><use href="#target"/></svg>
          <i class="tri m10"></i>
          <svg class="m12" width="23" height="23"><use href="#fit"/></svg>
          <svg class="m14" width="20" height="25"><use href="#dim"/></svg>
          <i class="tri m11"></i>
          <svg class="m11" width="26" height="25"><use href="#mon"/></svg>
          <i class="tri m8"></i>
          <i class="swatch red m12"></i>
          <i class="swatch sky m10"></i>
          <svg class="m10" width="24" height="24"><use href="#layers"/></svg>
          <i class="tri m9"></i>
          <div class="bulbs m8">
            <svg width="12" height="18"><path d="M6 1a5 5 0 0 1 3 9v3H3v-3a5 5 0 0 1 3-9zM4 15h4" fill="#fff" stroke="#aaa"/></svg>
            <svg width="14" height="14"><circle cx="7" cy="7" r="6" fill="#ddd" stroke="#999"/></svg>
          </div>
        </div>
        <div class="tooltip">F14 (六面体3_基体)</div>
      </div>
    </main>
  </div>
</div>
</body>
</html>
```
FILE: styles.css
```css
* { box-sizing: border-box; }
html, body { margin: 0; padding: 0; }
body {
  width: 1825px; height: 1063px; overflow: hidden; background: #fff;
  font-family: "Noto Sans", "Noto Sans CJK SC", sans-serif;
  font-size: 17px; line-height: 22px; color: #222;
}
i, em { font-style: normal; }
svg { display: block; flex: none; }
.sprite { position: absolute; }
.app { width: 1825px; height: 1063px; display: flex; flex-direction: column; overflow: hidden; }

/* spacing helpers */
.m2 { margin-left: 2px; } .m5 { margin-left: 5px; } .m6 { margin-left: 6px; } .m7 { margin-left: 7px; }
.m8 { margin-left: 8px; } .m9 { margin-left: 9px; } .m10 { margin-left: 10px; } .m11 { margin-left: 11px; }
.m12 { margin-left: 12px; } .m13 { margin-left: 13px; } .m14 { margin-left: 14px; } .m16 { margin-left: 16px; }
.m17 { margin-left: 17px; } .m18 { margin-left: 18px; }
.t4 { margin-top: 4px; } .t5 { margin-top: 5px; } .t7 { margin-top: 7px; } .t11 { margin-top: 11px; }
.t14 { margin-top: 14px; } .t15 { margin-top: 15px; } .t16 { margin-top: 16px; }
.grow { flex: 1; }

.tri { display: block; flex: none; width: 0; height: 0; border-left: 4.5px solid transparent; border-right: 4.5px solid transparent; border-top: 5px solid #444; }
.tri.off { border-top-color: #c4c6c8; }
.tri.small { border-left-width: 3.5px; border-right-width: 3.5px; border-top-width: 4px; }

/* ribbon */
.ribbon { height: 51px; flex: none; display: flex; background: #fdfdfe; border-bottom: 1px solid #c5c8cc; overflow: hidden; }
.rgroup { height: 48px; border-right: 1px solid #ccd0d4; display: flex; flex-direction: column; }
.g1 { width: 507px; } .g2 { width: 711px; } .g3 { width: 400px; }
.rarrows { display: flex; height: 24px; padding-top: 4px; }
.a1 { padding-left: 46px; }
.a2 { padding-left: 48px; } .a2 .tri:nth-child(2) { margin-left: 83px; } .a2 .tri:nth-child(3) { margin-left: 148px; }
.a3 { padding-left: 30px; } .a3 .tri:nth-child(2) { margin-left: 65px; } .a3 .tri:nth-child(3) { margin-left: 139px; }
.rlabel { text-align: center; color: #8a8a8a; font-size: 17px; line-height: 20px; letter-spacing: .5px; }
.g4 { flex: 1; display: flex; align-items: center; height: 20px; margin-top: -9px; padding-left: 8px; color: #444; }

/* top toolbar */
.toolbar { height: 37px; flex: none; display: flex; align-items: center; padding: 3px 0 1px 7px; background: #e1e4e8; }
.hl { width: 31px; height: 30px; flex: none; display: flex; align-items: center; justify-content: center; background: #ffe072; border: 1px solid #c89c3a; }
.sep { display: block; flex: none; width: 1px; height: 28px; background: #c2c5c9; }
.select { height: 30px; flex: none; display: flex; align-items: center; justify-content: space-between; padding: 1px 9px 0 5px; background: #fff; border: 1px solid #c6cacf; color: #222; }
.select.off { background: #eceeef; border-color: #e4e6e8; color: #999; padding-left: 4px; }
.select.off .tri { border-top-color: #aaa; }
.w146 { width: 146px; } .w196 { width: 196px; } .w145 { width: 145px; }
.c-gray { color: #a8a8a8; } .c-mix1 { color: #2a8f9a; } .c-mix2 { color: #2a8fb8; }

/* work area */
.work { flex: 1; display: flex; min-height: 0; }
.left { width: 483px; flex: none; display: flex; flex-direction: column; background: #e1e4e8; border-right: 1px solid #c6c9cd; }
.ptitle { height: 34px; flex: none; display: flex; align-items: center; padding: 1px 12px 0 0; border-bottom: 1px solid #c2c5c9; color: #555; }
.ptext { margin-left: -1px; flex: 1; }
.pbody { flex: 1; display: flex; min-height: 0; }
.rail { width: 41px; flex: none; display: flex; flex-direction: column; border-right: 1px solid #c0c3c7; }
.rtab { height: 72px; display: flex; align-items: center; justify-content: center; padding-right: 3px; }
.rtab.on { height: 71px; margin-right: -1px; background: #fff; border-bottom: 1px solid #c6c9cd; }
.panel { width: 441px; padding: 3px 5px 0 3px; background: #e1e4e8; border-right: 2px solid #c6c9cd; overflow: hidden; }
.actions { display: flex; gap: 2px; height: 35px; }
.abtn { width: 39px; height: 35px; padding: 0; flex: none; display: flex; align-items: center; justify-content: center; background: #fdfdfd; border: 1px solid #c6cacf; }
.abtn.b38 { width: 38px; }
.abtn.b20 { width: 20px; margin-left: 1px; }

.sec { margin-top: 2px; background: #dde2e9; border: 1px solid #c2c6cc; }
.s3, .s4 { margin-top: 3px; }
.shead { height: 36px; margin: 0; display: flex; align-items: center; gap: 7px; padding-left: 4px; background: #fdfdfe; border-bottom: 1px solid #c2c6cc; font-size: 17px; font-weight: 500; color: #3c3c3c; }
.stri { display: block; width: 0; height: 0; border-left: 7px solid transparent; border-right: 7px solid transparent; border-top: 12px solid #56595c; }
.sbody { padding-left: 12px; }
.b1 { padding-top: 8px; padding-bottom: 4px; }
.b2 { padding-top: 5px; padding-bottom: 5px; }
.b3 { padding-top: 17px; padding-bottom: 12px; }

.blue { position: relative; width: 405px; padding: 4px 0 4px 4px; background: #e3e3e3; border: 1px solid #1e90ff; display: flex; flex-direction: column; gap: 11px; }
.anno { position: absolute; left: -6px; top: -11px; width: 334px; height: 58px; border: 5px solid #f7ab0a; }
.notch { position: absolute; left: 9px; bottom: -5px; width: 8px; height: 8px; background: #dde2e9; border-right: 1px solid #1e90ff; border-bottom: 1px solid #1e90ff; transform: rotate(45deg); }
.row { display: flex; align-items: center; height: 32px; }
.lockrow { height: 38px; margin: -1px 0; }
.row2 { display: flex; align-items: center; height: 32px; }
.h30 { height: 30px; } .h20 { height: 20px; }
.lab, .lab2, .lab3, .lab4 { padding-top: 2px; color: #5a5a5a; flex: none; }
.lab { width: 81px; }
.lab2 { width: 137px; padding-left: 1px; }
.lab3 { width: 117px; padding-left: 9px; }
.lab4 { width: 142px; padding-left: 1px; }

.field { height: 32px; flex: none; display: flex; align-items: center; padding: 2px 0 0 3px; background: #fff; border: 1px solid #c2c6cc; color: #222; }
.h30 .field { height: 30px; }
.field.dis { background: #efefef; color: #999; }
.field.focus { border: 2px solid #2a8fe6; padding: 0 0 0 1px; }
.selected { background: #0078d7; color: #fff; height: 24px; line-height: 24px; padding: 0 1px; }
.field.num em { margin-left: auto; margin-right: 4px; }
.drop { justify-content: space-between; padding-right: 9px; }
.gr { color: #777; }
.w232 { width: 232px; } .w283 { width: 283px; } .w264 { width: 264px; } .w222 { width: 222px; }
.w203 { width: 203px; } .w267 { width: 267px; } .w153 { width: 153px; } .w212 { width: 212px; }

.spin { width: 22px; flex: none; display: flex; flex-direction: column; align-items: center; gap: 10px; margin-top: -2px; }
.spin i { display: block; width: 0; height: 0; border-left: 5px solid transparent; border-right: 5px solid transparent; border-top: 5px solid #555; }
.spin i:first-child { border-top: 0; border-bottom: 5px solid #555; }
.dis .spin i { border-top-color: #8b9a9a; border-bottom-color: #8b9a9a; }

.c-red { color: #e4284e; } .c-green { color: #2cc52c; } .c-yellow { color: #e0b020; } .c-off { color: #bcbcbc; }
.lockbtn { width: 42px; height: 38px; flex: none; padding: 0; display: flex; align-items: center; justify-content: center; background: #fff; border: 1px solid #cfd2d6; }
.cb { display: block; width: 20px; height: 20px; flex: none; background: linear-gradient(135deg, #c6ccd4, #eef0f3); border: 2px solid #9ea3a9; box-shadow: inset 0 0 0 1px #f4f5f7; }

.radios { display: flex; height: 18px; }
.radio { width: 204px; display: flex; align-items: center; gap: 10px; color: #5a5a5a; }
.s4 { height: 40px; }

/* right */
.right { flex: 1; display: flex; flex-direction: column; min-width: 0; }
.tabs { height: 34px; flex: none; display: flex; align-items: flex-end; background: #e1e4e8; border-bottom: 1px solid #c2c5c9; }
.tab { height: 32px; flex: none; display: flex; align-items: center; gap: 7px; padding-top: 1px; color: #222; margin-bottom: -1px; }
.tab.on { background: #fff; border: 1px solid #c6c9cd; border-bottom: 0; }
.tab.t1 { width: 223px; padding-left: 46px; }
.tab.t2 { width: 224px; padding-left: 48px; gap: 6px; }
.tab.t3 { width: 220px; padding-left: 32px; gap: 11px; }
.tab .ul { box-sizing: content-box; padding-bottom: 3px; border-bottom: 1px solid #d8cdaa; margin-top: 4px; }
.addtab { margin: 0 0 7px 7px; }

.viewport { flex: 1; position: relative; overflow: hidden; background: #fff; }
.scene { position: absolute; left: 0; top: 0; }
.vtools { position: relative; display: flex; align-items: center; height: 35px; padding-left: 609px; }
.swatch { display: block; flex: none; }
.swatch.red { width: 25px; height: 15px; background: #f60f3e; border: 1px solid #1a8a7a; }
.swatch.sky { width: 25px; height: 25px; background: #bee4f4; border: 1px solid #111; }
.bulbs { width: 51px; height: 30px; flex: none; display: flex; align-items: center; justify-content: center; gap: 4px; background: #eef0f0; border: 1px solid #d8dadc; }
.tooltip { position: absolute; left: 543px; top: 403px; width: 155px; height: 29px; white-space: nowrap; text-align: center; font-size: 17.500px; line-height: 27px; color: #222; background: linear-gradient(#fff, #e6e6f0); border: 1px solid #7a7f8a; }
.dim-text { font-family: "Liberation Sans", sans-serif; font-size: 27px; fill: #0a0a0a; }
.axis { font-family: "Liberation Sans", sans-serif; font-size: 24px; fill: #b06a10; }
.etch { font-family: "Liberation Sans", sans-serif; font-size: 42px; letter-spacing: 20px; fill: none; stroke: #1b8fe6; stroke-width: 2px; }
```
